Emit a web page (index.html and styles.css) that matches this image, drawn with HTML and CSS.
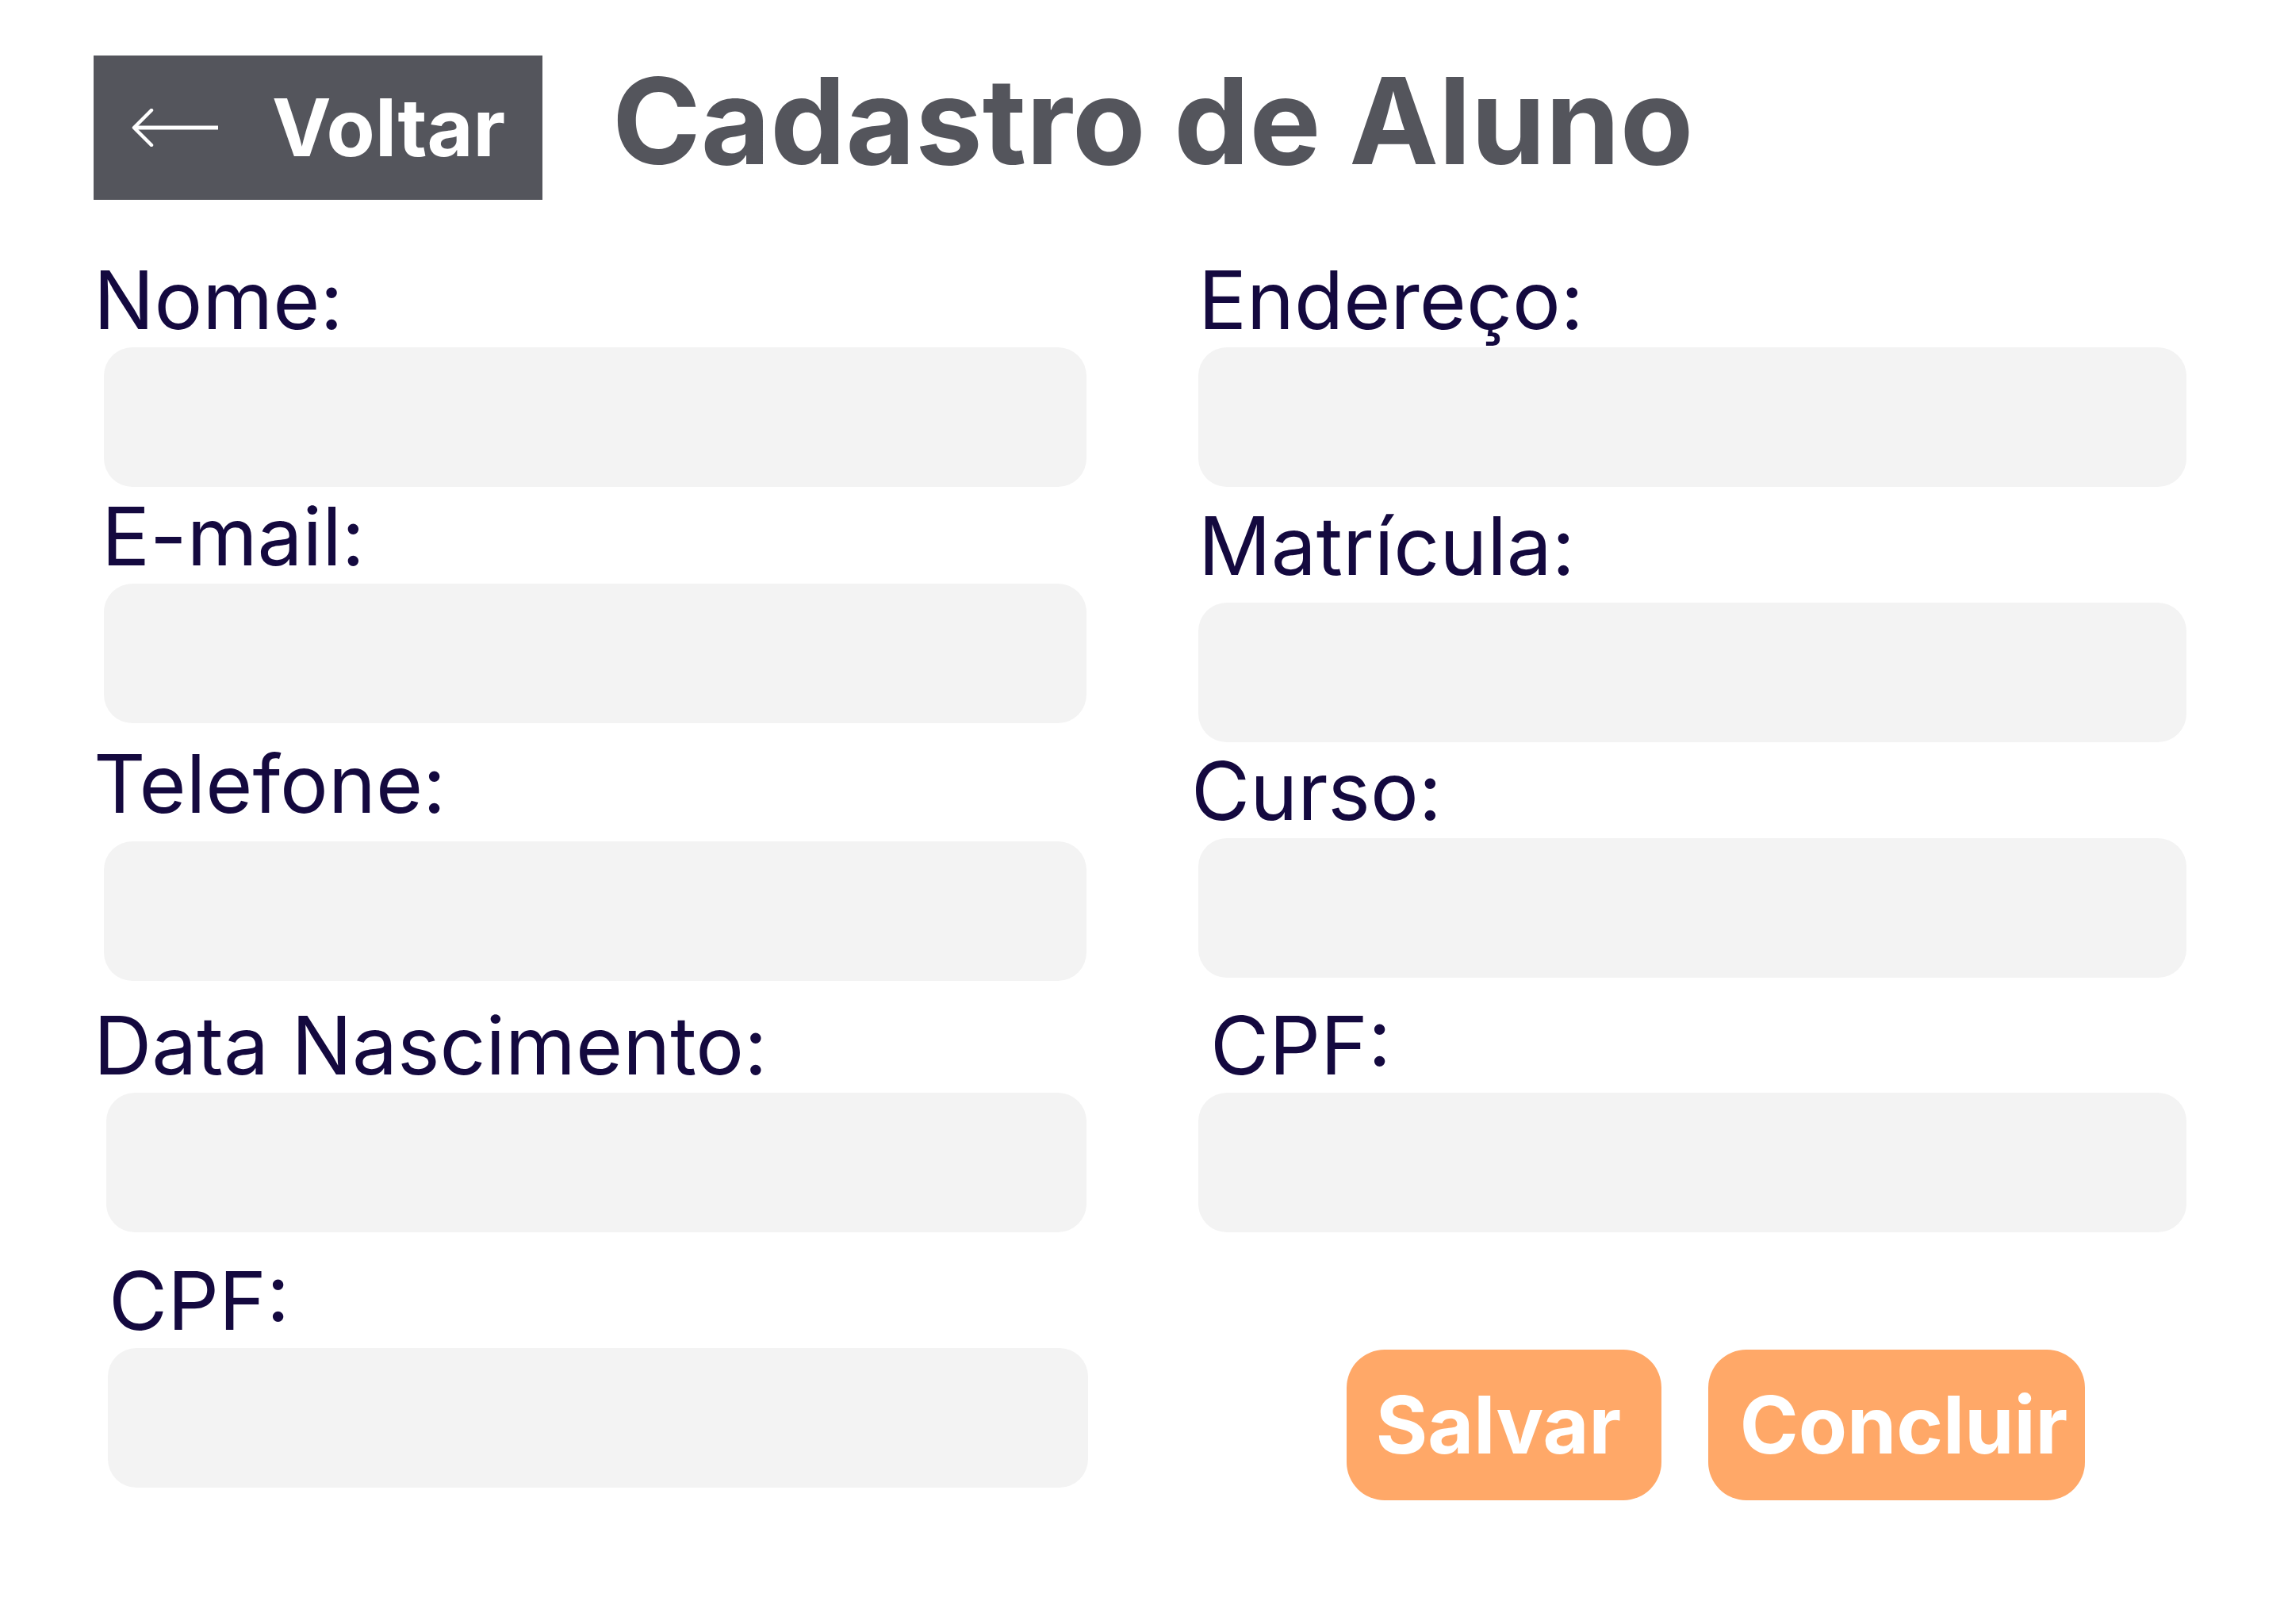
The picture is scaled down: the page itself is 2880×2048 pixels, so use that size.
FILE: index.html
```html
<!DOCTYPE html>
<html lang="pt-BR">
<head>
<meta charset="utf-8">
<title>Cadastro de Aluno</title>
<link rel="stylesheet" href="styles.css">
</head>
<body>
<div class="page">
  <header class="header">
    <button class="back-btn" type="button">
      <svg class="back-arrow" width="112" height="48" viewBox="0 0 112 48" aria-hidden="true">
        <path d="M26 2 L4 24 L26 46" fill="none" stroke="#ffffff" stroke-width="4.5" stroke-linecap="round" stroke-linejoin="round"/>
        <path d="M6 24 H110" fill="none" stroke="#ffffff" stroke-width="5"/>
      </svg>
      <span class="back-label">Voltar</span>
    </button>
    <h1 class="title">Cadastro de Aluno</h1>
  </header>

  <main class="form">
    <div class="col col-left">
      <div class="field f-nome">
        <label class="label">Nome:</label>
        <div class="input"></div>
      </div>
      <div class="field f-email">
        <label class="label">E-mail:</label>
        <div class="input"></div>
      </div>
      <div class="field f-tel">
        <label class="label">Telefone:</label>
        <div class="input"></div>
      </div>
      <div class="field f-data">
        <label class="label">Data Nascimento:</label>
        <div class="input"></div>
      </div>
      <div class="field f-cpf">
        <label class="label">CPF:</label>
        <div class="input"></div>
      </div>
    </div>

    <div class="col col-right">
      <div class="field f-end">
        <label class="label">Endereço:</label>
        <div class="input"></div>
      </div>
      <div class="field f-mat">
        <label class="label">Matrícula:</label>
        <div class="input"></div>
      </div>
      <div class="field f-curso">
        <label class="label">Curso:</label>
        <div class="input"></div>
      </div>
      <div class="field f-cpf2">
        <label class="label">CPF:</label>
        <div class="input"></div>
      </div>
      <div class="actions">
        <button class="action action-save" type="button">Salvar</button>
        <button class="action action-done" type="button">Concluir</button>
      </div>
    </div>
  </main>
</div>
</body>
</html>
```

FILE: styles.css
```css
* {
  box-sizing: border-box;
}

html, body {
  margin: 0;
  padding: 0;
  background: #ffffff;
}

body {
  font-family: "Inter", "Noto Sans", "Liberation Sans", sans-serif;
  width: 2880px;
  height: 2048px;
}

.page {
  padding: 70px 0 0 118px;
}

/* Header */
.header {
  display: flex;
  align-items: flex-start;
  gap: 88px;
}

.back-btn {
  display: flex;
  align-items: center;
  gap: 66px;
  width: 566px;
  height: 182px;
  padding: 0 0 0 47px;
  margin: 0;
  border: none;
  border-radius: 0;
  background: #54555c;
  color: #ffffff;
  font-family: inherit;
  cursor: pointer;
}

.back-arrow {
  display: block;
  flex: none;
}

.back-label {
  font-size: 100px;
  font-weight: 700;
  line-height: 1;
}

.title {
  margin: 7px 0 0 0;
  font-size: 151px;
  font-weight: 700;
  line-height: 1;
  color: #54555c;
  letter-spacing: 0;
}

/* Form */
.form {
  display: grid;
  grid-template-columns: 1252px 1251px;
  column-gap: 136px;
  margin-top: 76px;
}

.col {
  display: flex;
  flex-direction: column;
}

.field {
  display: flex;
  flex-direction: column;
}

.label {
  display: block;
  font-size: 101.5px;
  font-weight: 400;
  line-height: 100px;
  color: #14093f;
  margin-bottom: 10px;
}

.input {
  height: 176px;
  background: #f3f3f3;
  border-radius: 36px;
}

.col-left .input {
  margin-left: 13px;
}

.col-right .input {
  margin-left: 5px;
}

.col-right .label {
  margin-left: 5px;
}

/* Left column spacing */
.f-email { margin-top: 12px; }
.f-email .label { margin-left: 10px; }
.f-tel { margin-top: 26px; }
.f-tel .label { margin-bottom: 23px; }
.f-data { margin-top: 31px; }
.f-data .input { margin-left: 16px; }
.f-cpf { margin-top: 36px; }
.f-cpf .label { margin-left: 19px; }
.f-cpf .input { margin-left: 18px; margin-right: -2px; }

/* Right column spacing */
.f-mat { margin-top: 24px; }
.f-mat .label { margin-bottom: 22px; }
.f-curso { margin-top: 11px; }
.col-right .f-curso .label { margin-left: -4px; }
.f-cpf2 { margin-top: 35px; }
.col-right .f-cpf2 .label { margin-left: 20px; }

/* Actions */
.actions {
  display: flex;
  gap: 59px;
  margin-top: 148px;
  padding-left: 192px;
}

.action {
  display: flex;
  align-items: center;
  justify-content: center;
  height: 190px;
  padding: 0;
  margin: 0;
  border: none;
  border-radius: 48px;
  background: #ffa868;
  color: #ffffff;
  font-family: inherit;
  font-size: 100px;
  font-weight: 700;
  line-height: 1;
  cursor: pointer;
}

.action-save {
  width: 397px;
  padding-right: 14px;
}

.action-done {
  width: 475px;
  padding-left: 18px;
}
```
